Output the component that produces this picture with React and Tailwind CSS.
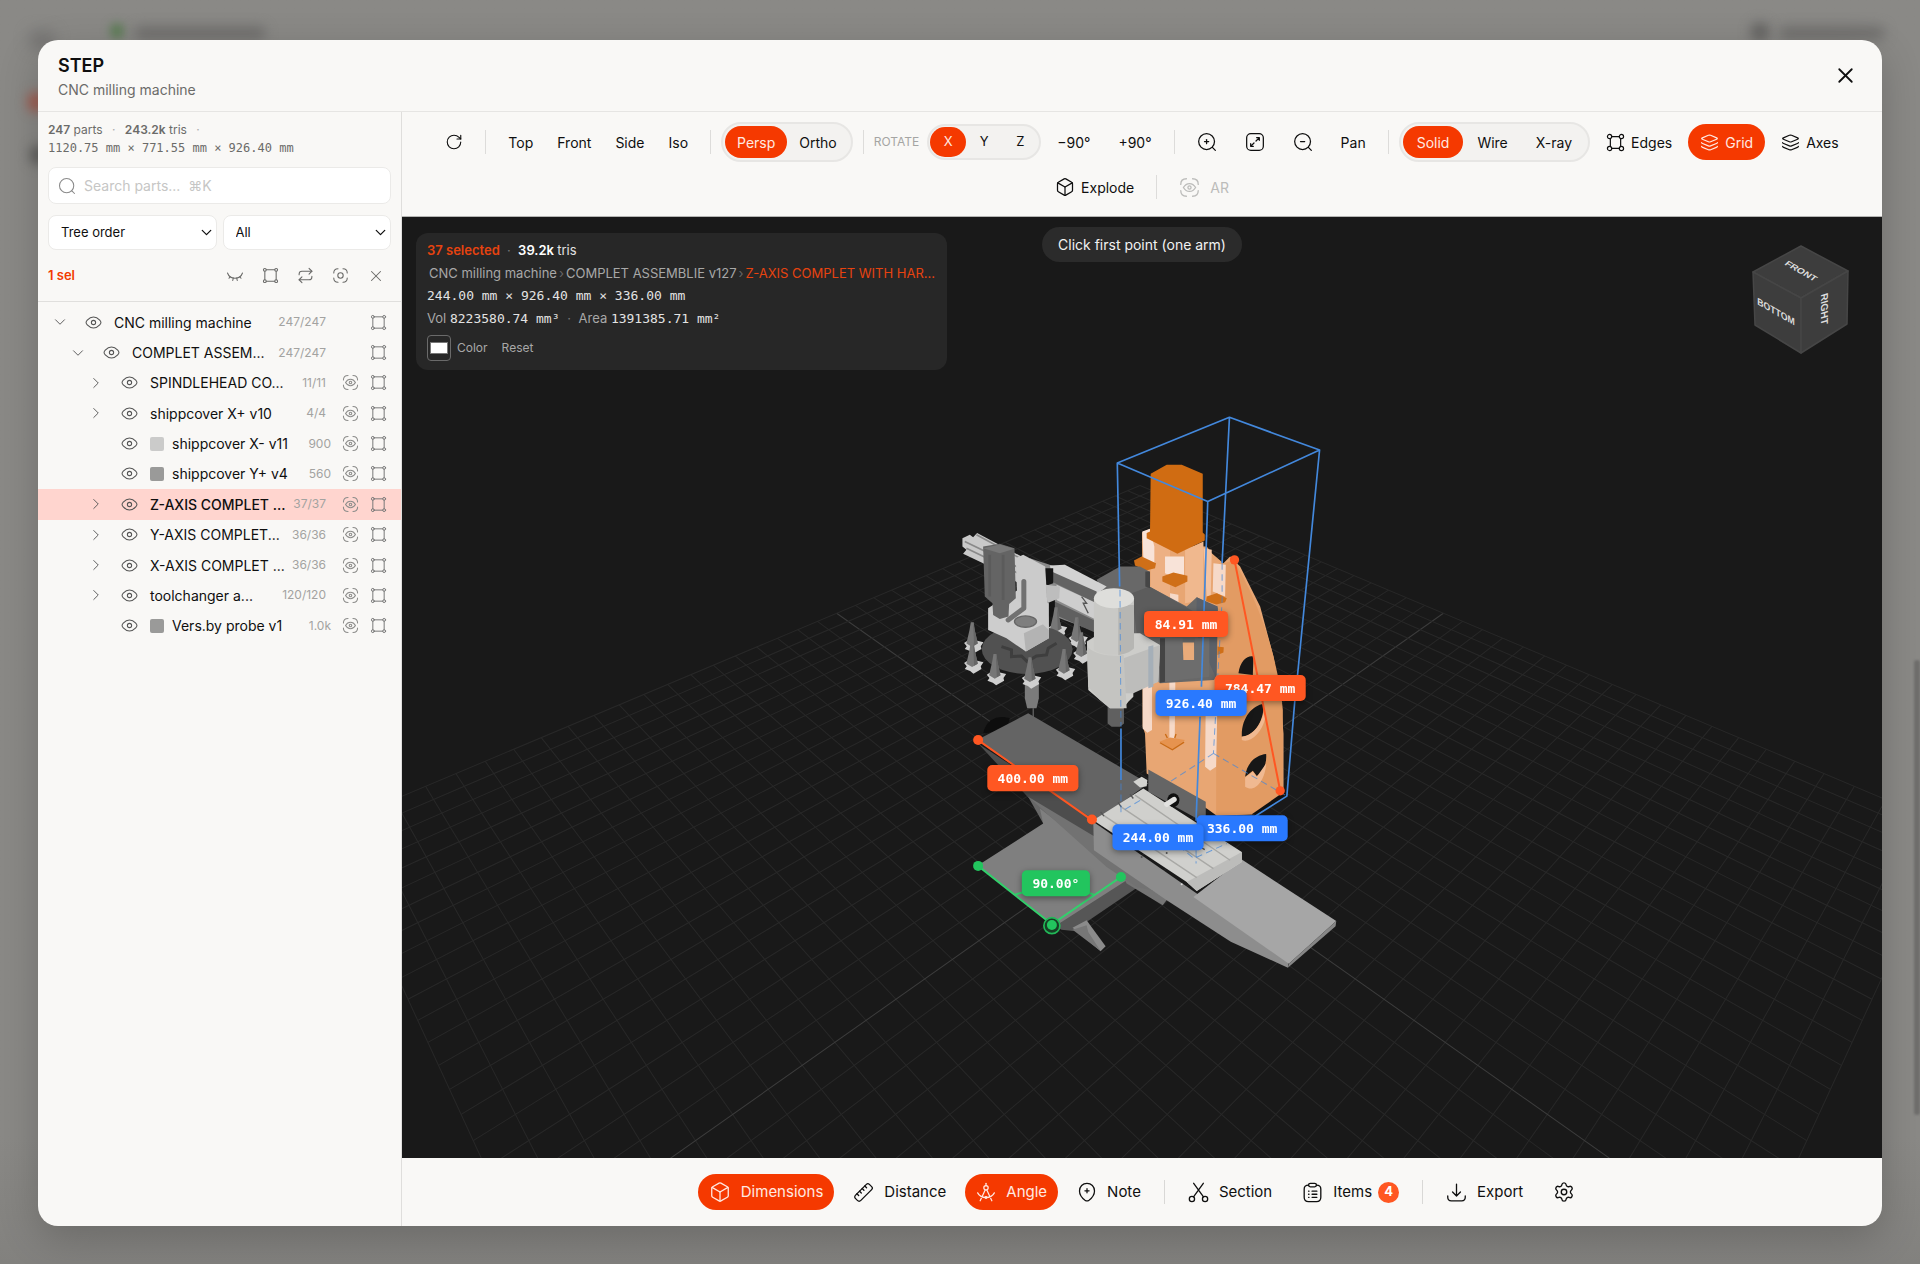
import React from "react";
import { Box, ChevronDown, ChevronRight, EyeClosed, Repeat, RotateCw, Ruler, Settings, X } from "lucide-react";

/* ---------- icons ---------- */

function Svg({ size = 20, sw = 1.5, children }) {
  return (
    <svg width={size} height={size} viewBox="0 0 24 24" fill="none" stroke="currentColor"
      strokeWidth={sw} strokeLinecap="round" strokeLinejoin="round" aria-hidden="true" className="shrink-0">
      {children}
    </svg>
  );
}
const BoundsIcon = (p) => (
  <Svg {...p}>
    <circle cx="4" cy="4" r="2" /><circle cx="20" cy="4" r="2" />
    <circle cx="4" cy="20" r="2" /><circle cx="20" cy="20" r="2" />
    <path d="M6 4h12M6 20h12M4 6v12M20 6v12" />
  </Svg>
);
const EdgesIcon = (p) => (
  <Svg {...p}>
    <circle cx="4.5" cy="4.5" r="2.7" /><circle cx="19.5" cy="4.5" r="2.7" />
    <circle cx="4.5" cy="19.5" r="2.7" /><circle cx="19.5" cy="19.5" r="2.7" />
    <path d="M7.2 4.5h9.6M7.2 19.5h9.6M5.5 7.2v9.6M18.5 7.2v9.6" />
  </Svg>
);
const StackIcon = (p) => (
  <Svg {...p}>
    <path d="M10.600 2.900 3 6.200c-1.200.5-1.200 1.200 0 1.700l7.600 3.200q1.400.6 2.800 0L21 7.900c1.200-.5 1.200-1.200 0-1.700l-7.600-3.300q-1.400-.6-2.800 0Z" />
    <path d="M2 12c0 .7.500 1 1.300 1.300l7.300 3q1.400.6 2.800 0l7.300-3C21.500 13 22 12.700 22 12" />
    <path d="M2 16.800c0 .7.500 1 1.300 1.300l7.300 3q1.400.6 2.800 0l7.300-3c.8-.3 1.300-.6 1.300-1.300" />
  </Svg>
);
const ZoomIcon = ({ plus, minus, ...p }) => (
  <Svg {...p}>
    <circle cx="11.5" cy="11.5" r="9.5" /><path d="m18.500 18.500 3.500 3.500" />
    {(plus || minus) && <path d="M9 11.500h5" />}
    {plus && <path d="M11.500 9v5" />}
  </Svg>
);
const FitIcon = (p) => (
  <Svg {...p}>
    <rect x="2" y="2" width="20" height="20" rx="5" />
    <path d="M14 6.800h3.200V10M17 7l-3.800 3.800M10 17.200H6.800V14M7 17l3.800-3.800" />
  </Svg>
);
const IsolateIcon = (p) => (
  <Svg {...p}>
    <path d="M2.500 8.500c0-4 2-6 6-6M15.500 2.500c4 0 6 2 6 6M21.500 15.500c0 4-2 6-6 6M8.500 21.500c-4 0-6-2-6-6" />
    <circle cx="12" cy="12" r="3.800" />
  </Svg>
);
const EyeIcon = (p) => (
  <Svg {...p}>
    <path d="M1.500 12c0-1.500.6-2.200 1.700-3.400C5.300 6.400 8.300 4.200 12 4.200s6.700 2.200 8.800 4.400c1.100 1.200 1.700 1.900 1.700 3.400s-.6 2.200-1.700 3.400c-2.100 2.200-5.100 4.400-8.800 4.400s-6.700-2.200-8.800-4.400C2.100 14.200 1.500 13.500 1.500 12Z" />
    <circle cx="12" cy="12" r="3" />
  </Svg>
);
const ScanEyeIcon = (p) => (
  <Svg {...p}>
    <path d="M2 8.500C2 4 4 2 8.500 2M15.500 2C20 2 22 4 22 8.500M22 15.500c0 4.500-2 6.500-6.500 6.500M8.500 22C4 22 2 20 2 15.500" />
    <path d="M5 12c1.800-3 4.200-4.500 7-4.500s5.200 1.500 7 4.500c-1.800 3-4.200 4.500-7 4.500S6.800 15 5 12Z" />
    <circle cx="12" cy="12" r="1.8" />
  </Svg>
);
const ExportIcon = (p) => (
  <Svg {...p}>
    <path d="M12 2.500v13M7.500 11.500 12 16l4.500-4.500M2 16v1.500C2 20 3.500 21.500 6 21.500h12c2.500 0 4-1.500 4-4V16" />
  </Svg>
);
const CompassIcon = (p) => (
  <Svg {...p}>
    <path d="M12 1.500v3" /><circle cx="12" cy="7" r="2.6" />
    <path d="M11 9.500 5 22.500M13 9.500l6 13M2 13c1.800 3.300 5.500 5.600 10 5.600s8.200-2.300 10-5.600" />
    <circle cx="12" cy="18.600" r="1" fill="currentColor" />
  </Svg>
);
const NoteIcon = (p) => (
  <Svg {...p}>
    <path d="M12 1.500c5.200 0 9 4.100 9 9.200 0 5.300-3.700 8.900-6.600 11.200q-2.400 1.700-4.800 0C6.700 19.600 3 16 3 10.700c0-5.100 3.800-9.200 9-9.200Z" />
    <path d="M12 8v5M9.500 10.500h5" />
  </Svg>
);
const ScissorsIcon = (p) => (
  <Svg {...p}>
    <circle cx="4.500" cy="19.500" r="3" /><circle cx="19.500" cy="19.500" r="3" />
    <path d="M6.300 17 17.500 1.500M17.700 17 6.500 1.500" />
  </Svg>
);
const ItemsIcon = (p) => (
  <Svg {...p}>
    <path d="M7.500 3.500C4 3.500 2.500 4.800 2.500 8v9.500c0 3.500 1.500 5 5 5h9c3.500 0 5-1.500 5-5V8c0-3.200-1.500-4.500-5-4.500" />
    <rect x="7.500" y="1.500" width="9" height="4" rx="2" />
    <path d="M11.500 10.500h5.500M11.500 14h5.500M11.500 17.500h5.500M7.500 10.500h.5M7.500 14h.5M7.500 17.500h.5" />
  </Svg>
);

/* ---------- sidebar ---------- */

const TREE = [
  { level: 0, name: "CNC milling machine", count: "247/247", open: true },
  { level: 1, name: "COMPLET ASSEM...", count: "247/247", open: true },
  { level: 2, name: "SPINDLEHEAD CO...", count: "11/11", ar: true, group: true },
  { level: 2, name: "shippcover X+ v10", count: "4/4", ar: true, group: true },
  { level: 2, name: "shippcover X- v11", count: "900", ar: true, swatch: "#cbcbca" },
  { level: 2, name: "shippcover Y+ v4", count: "560", ar: true, swatch: "#9a9a99" },
  { level: 2, name: "Z-AXIS COMPLET ...", count: "37/37", ar: true, group: true, selected: true },
  { level: 2, name: "Y-AXIS COMPLET...", count: "36/36", ar: true, group: true },
  { level: 2, name: "X-AXIS COMPLET ...", count: "36/36", ar: true, group: true },
  { level: 2, name: "toolchanger a...", count: "120/120", ar: true, group: true },
  { level: 2, name: "Vers.by probe v1", count: "1.0k", ar: true, swatch: "#9a9a99" },
];
const INDENT = ["pl-[13px]", "pl-[31px]", "pl-[49px]"];

function TreeRow({ row }) {
  const leaf = Boolean(row.swatch);
  return (
    <li className={`flex items-center pr-[14px] ${INDENT[row.level]} ${row.selected ? "bg-[#ffd5cf]" : ""}`}>
      {leaf ? (
        <span className="w-[18px]" />
      ) : (
        <button aria-label={row.open ? "Collapse" : "Expand"} className="flex w-[18px] justify-center text-[#555]">
          {row.open ? <ChevronDown size={18} strokeWidth={1.25} /> : <ChevronRight size={18} strokeWidth={1.25} />}
        </button>
      )}
      <button aria-label="Toggle visibility" className="ml-4 text-[#555]">
        <EyeIcon size={17} sw={1.5} />
      </button>
      {leaf && <span className="ml-3 size-3.5 shrink-0 rounded-xs" style={{ backgroundColor: row.swatch }} />}
      <span className={`${leaf ? "ml-2" : "ml-3"} min-w-0 flex-1 whitespace-nowrap text-[14px] ${row.selected ? "font-medium" : ""}`}>
        {row.name}
      </span>
      <span className={`text-[12px] text-[#a3a3a1] ${leaf ? "mr-[11px]" : "mr-4"}`}>{row.count}</span>
      {row.ar ? (
        <button aria-label="Isolate part" className="text-[#8d8d8b]"><ScanEyeIcon size={17} sw={1.5} /></button>
      ) : (
        <span className="w-[17px]" />
      )}
      <button aria-label="Fit part" className="ml-[11px] text-[#777]"><BoundsIcon size={17} sw={1.4} /></button>
    </li>
  );
}

function Picker({ label, value }) {
  return (
    <div className="relative flex-1">
      <select aria-label={label} defaultValue={value}
        className="h-[35px] w-full appearance-none rounded-lg border border-[#ebeae8] bg-white px-3 text-[13px]">
        <option>{value}</option>
      </select>
      <ChevronDown size={17} strokeWidth={1.75} className="pointer-events-none absolute top-[9px] right-[2px]" />
    </div>
  );
}

function Sidebar() {
  return (
    <aside className="flex w-[364px] shrink-0 flex-col border-r border-[#dfdedc]">
      <div className="border-b border-[#e0dfdd] px-[10px] pt-[9px]">
        <p className="text-[12px] leading-[18px] text-[#6b6b69]">
          <b className="font-semibold">247</b> parts <span className="mx-1.5 text-[#aaa]">·</span>{" "}
          <b className="font-semibold">243.2k</b> tris <span className="mx-1.5 text-[#aaa]">·</span>
        </p>
        <p className="font-['DejaVu_Sans_Mono',monospace] text-[12px] leading-[18px] text-[#6b6b69]">
          1120.75 mm × 771.55 mm × 926.40 mm
        </p>
        <label className="mt-2.5 flex h-[37px] items-center gap-2 rounded-lg border border-[#ebeae8] bg-white px-[9px] text-[#8a8a8a]">
          <ZoomIcon size={18} sw={1.4} />
          <input type="text" aria-label="Search parts" placeholder="Search parts...  ⌘K"
            className="w-full bg-transparent text-[14px] text-black outline-none placeholder:text-[#c6c6c5]" />
        </label>
        <div className="mt-[11px] flex gap-1.5">
          <Picker label="Order" value="Tree order" />
          <Picker label="Filter" value="All" />
        </div>
        <div className="flex h-[51px] items-center pr-1.5 text-[#6a6a68]">
          <span className="flex-1 text-[13px] font-semibold text-[#f23a00]">1 sel</span>
          <div className="flex gap-[18px]">
            <button aria-label="Hide selection"><EyeClosed size={18} strokeWidth={1.4} /></button>
            <button aria-label="Fit selection"><BoundsIcon size={17} sw={1.5} /></button>
            <button aria-label="Invert selection"><Repeat size={17} strokeWidth={1.5} /></button>
            <button aria-label="Isolate selection"><IsolateIcon size={17} sw={1.5} /></button>
            <button aria-label="Clear selection"><X size={18} strokeWidth={1.4} /></button>
          </div>
        </div>
      </div>
      <ul className="mt-[5px] grid h-[334px] auto-rows-fr">
        {TREE.map((row) => <TreeRow key={row.name} row={row} />)}
      </ul>
    </aside>
  );
}

/* ---------- toolbars ---------- */

function Tool({ icon, children, active, muted, label }) {
  return (
    <button aria-label={label}
      className={`flex h-9 items-center gap-1.5 rounded-full px-3 ${active ? "bg-[#f53900] text-[#ffe9e2]" : muted ? "text-[#bcbcba]" : ""}`}>
      {icon}
      {children}
    </button>
  );
}
const Divider = () => <span className="mx-1.5 h-6 w-px bg-[#dddcda]" />;

const SEGMENT_ITEM = { small: "h-[30px] w-9 text-[13px]", normal: "h-8 px-3", wide: "h-8 px-3.5" };

function Segment({ items, size = "normal" }) {
  return (
    <div className={`flex rounded-full border-2 border-[#e7e6e4] bg-[#f3f2f0] ${size === "small" ? "p-px" : "p-0.5"}`}>
      {items.map((item, i) => (
        <button key={item} className={`rounded-full ${SEGMENT_ITEM[size]} ${i === 0 ? "bg-[#f53900] text-[#ffe9e2]" : ""}`}>
          {item}
        </button>
      ))}
    </div>
  );
}

function TopToolbar() {
  return (
    <div className="flex flex-wrap items-center justify-center gap-x-1 gap-y-[7px] border-b border-[#b5b5b3] px-4 pt-[10px] pb-[11px] text-[14px]">
      <Tool label="Reset view" icon={<RotateCw size={18} strokeWidth={1.5} />} />
      <Divider />
      <div className="flex">
        <Tool>Top</Tool><Tool>Front</Tool><Tool>Side</Tool><Tool>Iso</Tool>
      </div>
      <Divider />
      <Segment items={["Persp", "Ortho"]} />
      <Divider />
      <span className="pr-1 text-[12px] text-[#a5a5a3]">ROTATE</span>
      <Segment size="small" items={["X", "Y", "Z"]} />
      <Tool>−90°</Tool><Tool>+90°</Tool>
      <Divider />
      <Tool label="Zoom in" icon={<ZoomIcon plus size={20} />} />
      <Tool label="Fit view" icon={<FitIcon size={20} />} />
      <Tool label="Zoom out" icon={<ZoomIcon minus size={20} />} />
      <Tool>Pan</Tool>
      <Divider />
      <Segment size="wide" items={["Solid", "Wire", "X-ray"]} />
      <Tool icon={<EdgesIcon size={19} />}>Edges</Tool>
      <Tool active icon={<StackIcon size={19} />}>Grid</Tool>
      <Tool icon={<StackIcon size={19} />}>Axes</Tool>
      <Tool icon={<Box size={20} strokeWidth={1.5} />}>Explode</Tool>
      <Divider />
      <Tool muted icon={<ScanEyeIcon size={21} />}><span className="ml-1">AR</span></Tool>
    </div>
  );
}

function BottomTool({ icon, children, active, label }) {
  return (
    <button aria-label={label} className={`flex h-9 items-center gap-2.5 rounded-full px-[11px] ${active ? "bg-[#f53900] text-[#ffe9e2]" : ""}`}>
      {icon}
      {children}
    </button>
  );
}

function BottomBar() {
  return (
    <div className="flex h-[68px] items-center justify-center gap-2 text-[15px]">
      <BottomTool active icon={<Box size={22} strokeWidth={1.4} />}>Dimensions</BottomTool>
      <BottomTool icon={<Ruler size={21} strokeWidth={1.5} className="-scale-x-100" />}>Distance</BottomTool>
      <BottomTool active icon={<CompassIcon size={20} />}>Angle</BottomTool>
      <BottomTool icon={<NoteIcon size={20} />}>Note</BottomTool>
      <span className="mx-1 h-6 w-px bg-[#d9d8d6]" />
      <BottomTool icon={<ScissorsIcon size={21} />}>Section</BottomTool>
      <BottomTool icon={<ItemsIcon size={21} />}>
        <span>Items</span>
        <span className="-ml-1 flex size-[21px] items-center justify-center rounded-full bg-[#ff5722] text-[13px] font-bold text-white">4</span>
      </BottomTool>
      <span className="mx-1 h-6 w-px bg-[#d9d8d6]" />
      <BottomTool icon={<ExportIcon size={21} />}>Export</BottomTool>
      <BottomTool label="Settings" icon={<Settings size={22} strokeWidth={1.5} />} />
    </div>
  );
}

/* ---------- 3D scene ---------- */

// Ground plane: both parameters run from -1 to 1 along the sides of the square.
function project(a, b) {
  const s = (a + b) * 0.7071;
  const t = (b - a) * 0.7071;
  const w = 1 + 0.477 * s;
  return [737 + (573 * t) / w, -237 + 847 / w];
}
const GRID = [];
for (let i = -20; i <= 20; i++) {
  const v = i / 20;
  GRID.push({ v, from: project(v, -1), to: project(v, 1) });
  GRID.push({ v, from: project(-1, v), to: project(1, v) });
}

const TAGS = [
  { x: 1186, y: 624, text: "84.91 mm", color: "#ff5722" },
  { x: 1260, y: 688, text: "784.47 mm", color: "#ff5722" },
  { x: 1201, y: 703, text: "926.40 mm", color: "#2979ff" },
  { x: 1033, y: 778, text: "400.00 mm", color: "#ff5722" },
  { x: 1242, y: 828, text: "336.00 mm", color: "#2979ff" },
  { x: 1158, y: 837, text: "244.00 mm", color: "#2979ff" },
  { x: 1056, y: 883, text: "90.00°", color: "#22c55e", w: 68 },
];

function ToolHolder({ x, y }) {
  return (
    <g transform={`translate(${x} ${y})`}>
      <path d="M-24 34-6 22 34 32 26 44 28 52 4 66-6 58-22 52-16 44Z" fill="#cfcfcf" />
      <path d="M-17 36-14 22-8-4-4-28 5-28 8-4 14 22 17 36 0 46Z" fill="#777" />
      <path d="M3-28 8-4 17 36 6 42Z" fill="#666" />
    </g>
  );
}

function Machine() {
  return (
    <g transform="translate(537 183) scale(.33333)">
      {/* column */}
      <path d="M606 398 632 386 645 410 690 440 760 440 800 440 815 460 850 490 870 470 900 500 960 620 1000 770 1020 890 1030 1000 1030 1190 945 1242 830 1247 800 1225 620 1120 615 1000 608 980Z" fill="#e8a673" />
      <path d="M830 500 880 480C940 580 1010 740 1028 930L1028 1190 935 1242 828 1245Z" fill="#e29b63" />
      <path d="M790 445 815 450 812 590 800 590Z" fill="#f3c4a3" />
      <path d="M632 420 690 450 690 640 632 600Z" fill="#edb083" />
      <path d="M735 450 790 425 790 600 735 610Z" fill="#f0b88e" />
      <path d="M607 395 630 387 643 440 643 490 610 475ZM675 470 732 470 732 525 705 532 675 520Z" fill="#f8e3d8" />
      <path d="M820 490 857 495 855 590 818 575ZM608 840 636 840 636 990 622 998 608 985ZM688 840 706 840 704 1015 688 1015ZM797 900 832 905 828 1100 810 1112 795 1100ZM690 580 715 585 715 620 690 610Z" fill="#f6d9c8" />
      <path d="M632 222 680 195 725 195 788 222 788 398 794 404 794 422 712 462 620 415 620 400 630 395Z" fill="#d06c12" />
      <path d="M582 482 605 470 648 490 645 505 618 512 585 497ZM667 530 700 518 742 528 742 545 706 562 667 545ZM800 590 830 580 860 595 855 607 828 614 798 603ZM832 740 851 742 850 758 832 765Z" fill="#cf6f18" />
      <path d="M658 1025 690 1012 735 1020 697 1048Z" fill="#e6934f" />
      <path d="M660 1028 697 1049 732 1026M676 1002l6 12M708 1002l-4 12" stroke="#c96a14" strokeWidth="4" fill="none" />
      <path d="M895 820C900 780 925 765 940 770L938 825ZM905 1005C905 950 940 915 970 912 972 955 950 1005 905 1010ZM915 1130C920 1085 950 1065 978 1062 980 1090 970 1115 950 1128L938 1112Z" fill="#171717" />
      <path d="M905 1010C945 1008 970 960 972 925L975 955C965 1000 930 1030 905 1020ZM915 1132 938 1114 950 1130 978 1090C975 1140 945 1180 915 1160Z" fill="#f0b991" />
      <path d="M935 1242 1036 1172 1036 1190 955 1245Z" fill="#111" />

      {/* spindle carriage */}
      <path d="M470 540 540 500 600 500 628 515 628 560 740 620 770 592 833 625 830 825 822 840 660 850 600 800Z" fill="#686868" />
      <path d="M575 580 628 560 770 640 770 700 590 700Z" fill="#5c5c5c" />
      <path d="M770 592 833 620 828 835 768 700Z" fill="#5b6068" />
      <path d="M660 710 728 715 728 778 760 780 765 715 808 715 808 830 670 845Z" fill="#6d6d6d" />
      <path d="M728 728 762 728 762 780 730 780Z" fill="#e9ab7a" />
      <path d="M660 715 675 715 675 845 660 848Z" fill="#444" />
      <path d="M616 515 630 515 630 565 616 560Z" fill="#464646" />

      {/* tool changer arm */}
      <path d="M68 415 90 405 100 412 112 400 245 470 255 560 130 490 70 462 80 450 68 440Z" fill="#c9c9c9" />
      <path d="M75 425 240 505M80 445 235 520M110 405 240 475" stroke="#8a8a8a" strokeWidth="5" />
      <path d="M270 475 345 500 470 560 480 700 345 650Z" fill="#8a8a8a" />
      <path d="M330 497 375 495 500 560 470 585 335 520Z" fill="#d2d2d2" />
      <path d="M335 515 470 575 470 610 335 545Z" fill="#636363" />
      <path d="M350 555 470 610 470 660 350 600Z" fill="#cecece" />
      <path d="M335 600 470 665 470 700 335 640Z" fill="#606060" />
      <path d="M312 505 340 505 340 550 312 560ZM320 600 345 600 345 655 320 645Z" fill="#151515" />
      <path d="M425 590 440 610 430 610 445 640" stroke="#555" strokeWidth="4" fill="none" />

      {/* carousel */}
      <ToolHolder x={348} y={650} /><ToolHolder x={410} y={680} />
      <ToolHolder x={97} y={695} />
      <ellipse cx="262" cy="748" rx="136" ry="74" fill="#515151" />
      <path d="M185 740 215 750 215 770 245 768 262 785 290 768 320 765 325 745 350 730" stroke="#3e3e3e" strokeWidth="9" fill="none" />
      <path d="M145 625 175 605 235 570 327 610 327 715 258 755 200 715 145 690Z" fill="#cdcdcd" />
      <path d="M252 700 327 665 327 715 258 755Z" fill="#b3b3b3" />
      <ellipse cx="257" cy="665" rx="33" ry="17" fill="#7e7e7e" stroke="#666" strokeWidth="4" />
      <path d="M228 475 250 465 316 500 327 690 232 600Z" fill="#cbcbcb" />
      <path d="M318 555 360 560 358 595 322 610Z" fill="#bdbdbd" />
      <path d="M252 545V625L205 660" stroke="#717171" strokeWidth="15" fill="none" strokeLinejoin="round" strokeLinecap="round" />
      <path d="M130 440 180 432 224 445 228 595 208 612 206 650 180 657 160 645 158 610 135 590Z" fill="#646464" />
      <path d="M130 445 180 460 224 447 180 434Z" fill="#787878" />
      <path d="M150 465V590M190 465V600" stroke="#5b5b5b" strokeWidth="8" />
      <ToolHolder x={97} y={755} /><ToolHolder x={165} y={790} />
      <ToolHolder x={424} y={725} /><ToolHolder x={372} y={775} />
      <path d="M255 850H297V895L290 925H262L255 895Z" fill="#7b7b7b" />
      <path d="M280 925V965" stroke="#777" strokeWidth="3" />
      <ToolHolder x={270} y={800} />

      {/* spindle */}
      <path d="M503 905H552V970L540 980H515L503 970Z" fill="#606060" />
      <path d="M441 725 480 700 600 700 660 735 655 845 580 870 580 890 565 905 550 925 510 925 480 900 445 870Z" fill="#cdcdca" />
      <path d="M551 775 660 735 655 845 580 880 551 880Z" fill="#bdbdbb" />
      <path d="M441 740C470 770 530 770 551 765L560 925H510L480 900 445 860Z" fill="#c4c4c1" />
      <path d="M462 595V750C490 770 555 770 582 745V595Z" fill="#c9c9c6" />
      <path d="M535 615H582V745C570 758 550 764 535 765Z" fill="#b6b6b3" />
      <ellipse cx="522" cy="595" rx="60" ry="30" fill="#dededb" />
      <path d="M625 740 640 736 640 860 625 865Z" fill="#a5afb8" />

      {/* bed and table */}
      <g transform="translate(0 840)">
        <path d="M130 160C140 110 185 105 210 115L200 150Z" fill="#0d0d0d" />
        <path d="M112 180 265 100 625 310 465 425Z" fill="#646464" />
        <path d="M115 190 465 420 465 500 265 352Z" fill="#4d4d4d" />
        <path d="M265 350 310 430 400 480 345 410Z" fill="#686868" />
        <path d="M115 555 310 430 300 385 590 610 345 738Z" fill="#7f7f7f" />
        <path d="M345 738 560 600 592 622 400 752 365 748Z" fill="#565656" />
        <path d="M398 742 440 720 497 798 482 813Z" fill="#8b8b8b" />
        <path d="M398 748 440 735 445 755 482 812Z" fill="#777" />
        <path d="M545 580 684 655 668 675 560 610Z" fill="#757575" />
        <path d="M265 350 465 470 465 500 680 640 590 620 500 560Z" fill="#727272" />
        <path d="M460 425 770 640 1045 845 1043 862 872 784 680 660 462 510Z" fill="#8d8d8d" />
        <path d="M760 650 905 538 1188 722 1046 850Z" fill="#a6a6a6" />
        <path d="M1046 850 1188 722 1186 738 1043 862Z" fill="#868686" />
        <path d="M625 268 797 365 797 430 625 335Z" fill="#656565" />
        <path d="M460 420 610 325 905 515 905 545 770 632 740 605Z" fill="#d0d0cd" />
        <path d="M740 605 905 515 905 545 770 632Z" fill="#bcbcba" />
        <path d="M580 305 605 290 622 300 620 318 600 322Z" fill="#d3d3d0" />
        <path d="M490 405 770 592M540 378 820 565M585 345 870 540" stroke="#a8a8a5" strokeWidth="4" />
        <path d="M482 395 492 408M534 367 544 380M570 342 580 355M520 445l14 8M700 450l14 8M780 500l14 8" stroke="#555" strokeWidth="4" />
        <ellipse cx="700" cy="360" rx="18" ry="21" fill="#0f0f0f" />
        <path d="M680 372 702 358" stroke="#e2e2e0" strokeWidth="16" strokeLinecap="round" />
        <circle cx="605" cy="530" r="3" fill="#555" /><circle cx="680" cy="518" r="3" fill="#555" /><circle cx="725" cy="612" r="3" fill="#ddd" />
      </g>

      {/* selection bounds */}
      <g fill="none" stroke="#4388dc" strokeWidth="5" strokeLinejoin="round">
        <path d="M532 190 868 53 1138 151 803 305ZM868 53 846 490M1138 151 1072 825M1064 900 1040 1188 945 1248M532 190 539 560M803 305 784 860M780 950 768 1262M543 985V1140" />
        <path d="M846 490V600L820 1060M540 570 543 980M820 1060 690 1145M820 1060 1035 1185M543 1150V1235L610 1195M768 1350V1390M768 1372 860 1330M640 1275 768 1380" strokeWidth="3" strokeDasharray="20 13" opacity=".7" />
      </g>

      {/* distance and angle measurements */}
      <path d="M883 480 1020 1172M115 1020 456 1260" stroke="#ff5722" strokeWidth="6" />
      <g fill="#ff5722">
        <circle cx="883" cy="480" r="14" /><circle cx="1020" cy="1172" r="14" /><circle cx="115" cy="1020" r="15" /><circle cx="456" cy="1258" r="15" />
      </g>
      <g stroke="#33d06c" strokeWidth="6" fill="none">
        <path d="M115 1397 336 1572 543 1430M225 1484C260 1465 430 1465 463 1484" />
        <circle cx="336" cy="1576" r="24" stroke="#22b858" strokeWidth="5" fill="#173f25" />
        <g fill="#22c55e" stroke="none"><circle cx="115" cy="1397" r="15" /><circle cx="543" cy="1430" r="15" /><circle cx="336" cy="1574" r="15" /></g>
      </g>
    </g>
  );
}

function Scene() {
  return (
    <svg viewBox="0 0 1478 941" preserveAspectRatio="xMidYMid slice" className="absolute inset-0 size-full" role="img" aria-label="CNC milling machine model">
      <rect width="1478" height="941" fill="#191919" />
      {GRID.map((l, i) => (
        <line key={i} x1={l.from[0]} y1={l.from[1]} x2={l.to[0]} y2={l.to[1]} stroke={l.v === 0 ? "#3c3c3c" : "#282828"} />
      ))}
      <Machine />
      <g transform="translate(-403 -217)" fontFamily="'DejaVu Sans Mono', monospace" fontSize="13" fontWeight="700" textAnchor="middle" fill="#fff">
        {TAGS.map((t) => {
          const w = t.w ?? (t.text.length === 8 ? 84 : 91);
          return (
            <g key={t.text} className="drop-shadow-[0_2px_3px_rgba(0,0,0,0.4)]">
              <rect x={t.x - w / 2} y={t.y - 13} width={w} height="26" rx="5" fill={t.color} />
              <text x={t.x} y={t.y + 5}>{t.text}</text>
            </g>
          );
        })}
      </g>
    </svg>
  );
}

function ViewCube() {
  return (
    <svg width="100" height="112" viewBox="0 0 100 112" className="absolute top-[27px] right-[31px]" role="img" aria-label="View cube">
      <g fill="#3d3d3d" stroke="#464646" strokeWidth="1.5" strokeLinejoin="round">
        <path d="M50 2 97 27 50 54 2 28Z" /><path d="M2 28 50 54 50 109 4 81Z" /><path d="M97 27 50 54 50 109 96 80Z" />
      </g>
      <g fill="#dcdcdc" fontFamily="'Liberation Sans', sans-serif" fontWeight="700" fontSize="10" textAnchor="middle">
        <text transform="matrix(.87 .5 -.6 .6 48 29)">FRONT</text>
        <text transform="matrix(.87 .5 0 1 25 71)">BOTTOM</text>
        <text transform="matrix(0 1 -1 .3 70 66)">RIGHT</text>
      </g>
    </svg>
  );
}

function SelectionCard() {
  const mono = "font-['DejaVu_Sans_Mono',monospace] text-[13px] text-[#e3e3e3]";
  return (
    <section className="absolute top-4 left-[14px] w-[531px] rounded-xl bg-[#272727] px-[11px] pt-1.5 pb-2 text-[13px] text-[#a8a8a8]">
      <p className="leading-[23px] font-semibold text-[#e8430f]">
        37 selected <span className="mx-1 font-normal text-[#777]">·</span> <span className="text-white">39.2k</span> <span className="font-normal text-[#e3e3e3]">tris</span>
      </p>
      <nav aria-label="Breadcrumb" className="flex gap-0.5 px-0.5 text-[13px] leading-[22px] whitespace-nowrap">
        <button>CNC milling machine</button><span className="text-[#666]">›</span>
        <button>COMPLET ASSEMBLIE v127</button><span className="text-[#666]">›</span>
        <button className="text-[#e8430f]">Z-AXIS COMPLET WITH HAR...</button>
      </nav>
      <p className={`leading-[23px] ${mono}`}>244.00 mm × 926.40 mm × 336.00 mm</p>
      <p className="leading-[23px]">
        Vol <span className={mono}>8223580.74 mm³</span> <span className="mx-1 text-[#777]">·</span> Area <span className={mono}>1391385.71 mm²</span>
      </p>
      <div className="mt-1 flex h-7 items-center gap-1.5 text-[12px]">
        <input id="part-color" type="color" defaultValue="#ffffff" className="h-[26px] w-6 rounded-sm border border-[#6a6a6a] bg-transparent px-0 py-0.5" />
        <label htmlFor="part-color">Color</label>
        <button className="ml-2">Reset</button>
      </div>
    </section>
  );
}

/* ---------- page ---------- */

function Backdrop() {
  return (
    <div aria-hidden="true" className="absolute inset-0 overflow-hidden bg-linear-to-b from-[#8a8986] from-90% to-[#82817e]">
      <div className="absolute top-[30px] left-[28px] h-5 w-7 rounded-full bg-[#777674] blur-[7px]" />
      <div className="absolute top-[23px] left-[110px] h-4 w-3.5 rounded-full bg-[#5c7d55] blur-[5px]" />
      <div className="absolute top-[26px] left-[134px] h-3.5 w-[132px] rounded-full bg-[#71706e] blur-[6px]" />
      <div className="absolute top-[22px] left-[1750px] h-5 w-5 rounded-full bg-[#666563] blur-[6px]" />
      <div className="absolute top-[26px] left-[1779px] h-3.5 w-[106px] rounded-full bg-[#71706e] blur-[6px]" />
      <div className="absolute top-[92px] left-[28px] h-5 w-4 rounded-full bg-[#a1584b] blur-[6px]" />
      <div className="absolute top-[145px] left-[30px] h-5 w-4 rounded-full bg-[#5e5d5b] blur-[6px]" />
      <div className="absolute top-[660px] right-0 h-[455px] w-1.5 rounded-full bg-[#6f6e6c] blur-[1px]" />
    </div>
  );
}

export default function App() {
  return (
    <div className="relative flex h-screen bg-[#8a8986] px-[38px] pt-10 pb-[38px] font-['Inter',sans-serif] text-[#0f0f0f]">
      <Backdrop />
      <main className="relative flex min-w-0 flex-1 flex-col overflow-hidden rounded-[20px] bg-[#f9f8f6] shadow-[0_12px_40px_rgba(0,0,0,0.2)]">
        <header className="flex h-[72px] shrink-0 items-center justify-between border-b border-[#e6e5e3] pr-6 pl-5">
          <div className="pt-0.5">
            <h1 className="text-[18px] leading-[26px] font-semibold">STEP</h1>
            <p className="text-[14px] leading-[22px] text-[#6b6b69]">CNC milling machine</p>
          </div>
          <button aria-label="Close"><X size={25} strokeWidth={1.75} /></button>
        </header>
        <div className="flex min-h-0 flex-1">
          <Sidebar />
          <div className="flex min-w-0 flex-1 flex-col">
            <TopToolbar />
            <div className="relative min-h-0 flex-1 overflow-hidden bg-[#191919]">
              <Scene />
              <SelectionCard />
              <div role="status" className="absolute top-[10px] left-1/2 -translate-x-1/2 rounded-full bg-[#2b2b2b] px-4 py-[7px] text-[14px] text-[#f2f2f2]">
                Click first point (one arm)
              </div>
              <ViewCube />
            </div>
            <BottomBar />
          </div>
        </div>
      </main>
    </div>
  );
}
